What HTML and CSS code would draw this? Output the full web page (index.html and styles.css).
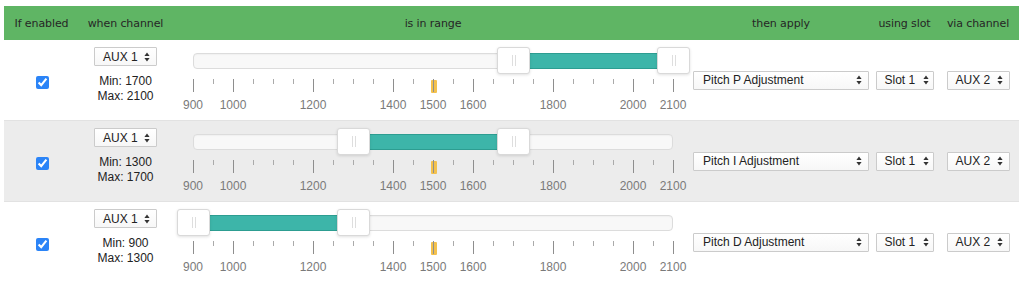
FILE: index.html
```html
<!DOCTYPE html>
<html>
<head>
<meta charset="utf-8">
<link rel="stylesheet" href="styles.css">
</head>
<body>
<div class="table">
  <div class="head">
    <div>If enabled</div>
    <div>when channel</div>
    <div class="h-range">is in range</div>
    <div>then apply</div>
    <div>using slot</div>
    <div>via channel</div>
  </div>

  <!-- Row 1 -->
  <div class="row">
    <div class="c-check"><input type="checkbox" checked></div>
    <div class="c-chan">
      <div class="sel sel-aux"><span>AUX 1</span><svg class="arr" width="6" height="10" viewBox="0 0 6 10"><path d="M3 0.5 L5.6 4 L0.4 4 Z M3 9.5 L5.6 6 L0.4 6 Z" fill="#333"/></svg></div>
      <div class="mm">Min: 1700<br>Max: 2100</div>
    </div>
    <div class="c-range">
      <div class="slider">
        <div class="track"></div>
        <div class="fill" style="left:320px;width:160px"></div>
        <div class="handle" style="left:320px"></div>
        <div class="handle" style="left:480px"></div>
      </div>
      <div class="scale">
        <i class="t big" style="left:0px"></i><i class="t" style="left:20px"></i><i class="t big" style="left:40px"></i><i class="t" style="left:60px"></i><i class="t" style="left:80px"></i><i class="t" style="left:100px"></i><i class="t big" style="left:120px"></i><i class="t" style="left:140px"></i><i class="t" style="left:160px"></i><i class="t" style="left:180px"></i><i class="t big" style="left:200px"></i><i class="t" style="left:220px"></i><i class="cur" style="left:240px"></i><i class="t big" style="left:240px"></i><i class="t" style="left:260px"></i><i class="t big" style="left:280px"></i><i class="t" style="left:300px"></i><i class="t" style="left:320px"></i><i class="t" style="left:340px"></i><i class="t big" style="left:360px"></i><i class="t" style="left:380px"></i><i class="t" style="left:400px"></i><i class="t" style="left:420px"></i><i class="t big" style="left:440px"></i><i class="t" style="left:460px"></i><i class="t big" style="left:480px"></i>
        <span class="lbl" style="left:0px">900</span><span class="lbl" style="left:40px">1000</span><span class="lbl" style="left:120px">1200</span><span class="lbl" style="left:200px">1400</span><span class="lbl" style="left:240px">1500</span><span class="lbl" style="left:280px">1600</span><span class="lbl" style="left:360px">1800</span><span class="lbl" style="left:440px">2000</span><span class="lbl" style="left:480px">2100</span>
      </div>
    </div>
    <div class="c-mid"><div class="sel sel-fn"><span>Pitch P Adjustment</span><svg class="arr" width="6" height="10" viewBox="0 0 6 10"><path d="M3 0.5 L5.6 4 L0.4 4 Z M3 9.5 L5.6 6 L0.4 6 Z" fill="#333"/></svg></div></div>
    <div class="c-mid"><div class="sel sel-slot"><span>Slot 1</span><svg class="arr" width="6" height="10" viewBox="0 0 6 10"><path d="M3 0.5 L5.6 4 L0.4 4 Z M3 9.5 L5.6 6 L0.4 6 Z" fill="#333"/></svg></div></div>
    <div class="c-mid"><div class="sel sel-aux"><span>AUX 2</span><svg class="arr" width="6" height="10" viewBox="0 0 6 10"><path d="M3 0.5 L5.6 4 L0.4 4 Z M3 9.5 L5.6 6 L0.4 6 Z" fill="#333"/></svg></div></div>
  </div>

  <!-- Row 2 -->
  <div class="row alt">
    <div class="c-check"><input type="checkbox" checked></div>
    <div class="c-chan">
      <div class="sel sel-aux"><span>AUX 1</span><svg class="arr" width="6" height="10" viewBox="0 0 6 10"><path d="M3 0.5 L5.6 4 L0.4 4 Z M3 9.5 L5.6 6 L0.4 6 Z" fill="#333"/></svg></div>
      <div class="mm">Min: 1300<br>Max: 1700</div>
    </div>
    <div class="c-range">
      <div class="slider">
        <div class="track"></div>
        <div class="fill" style="left:160px;width:160px"></div>
        <div class="handle" style="left:160px"></div>
        <div class="handle" style="left:320px"></div>
      </div>
      <div class="scale">
        <i class="t big" style="left:0px"></i><i class="t" style="left:20px"></i><i class="t big" style="left:40px"></i><i class="t" style="left:60px"></i><i class="t" style="left:80px"></i><i class="t" style="left:100px"></i><i class="t big" style="left:120px"></i><i class="t" style="left:140px"></i><i class="t" style="left:160px"></i><i class="t" style="left:180px"></i><i class="t big" style="left:200px"></i><i class="t" style="left:220px"></i><i class="cur" style="left:240px"></i><i class="t big" style="left:240px"></i><i class="t" style="left:260px"></i><i class="t big" style="left:280px"></i><i class="t" style="left:300px"></i><i class="t" style="left:320px"></i><i class="t" style="left:340px"></i><i class="t big" style="left:360px"></i><i class="t" style="left:380px"></i><i class="t" style="left:400px"></i><i class="t" style="left:420px"></i><i class="t big" style="left:440px"></i><i class="t" style="left:460px"></i><i class="t big" style="left:480px"></i>
        <span class="lbl" style="left:0px">900</span><span class="lbl" style="left:40px">1000</span><span class="lbl" style="left:120px">1200</span><span class="lbl" style="left:200px">1400</span><span class="lbl" style="left:240px">1500</span><span class="lbl" style="left:280px">1600</span><span class="lbl" style="left:360px">1800</span><span class="lbl" style="left:440px">2000</span><span class="lbl" style="left:480px">2100</span>
      </div>
    </div>
    <div class="c-mid"><div class="sel sel-fn"><span>Pitch I Adjustment</span><svg class="arr" width="6" height="10" viewBox="0 0 6 10"><path d="M3 0.5 L5.6 4 L0.4 4 Z M3 9.5 L5.6 6 L0.4 6 Z" fill="#333"/></svg></div></div>
    <div class="c-mid"><div class="sel sel-slot"><span>Slot 1</span><svg class="arr" width="6" height="10" viewBox="0 0 6 10"><path d="M3 0.5 L5.6 4 L0.4 4 Z M3 9.5 L5.6 6 L0.4 6 Z" fill="#333"/></svg></div></div>
    <div class="c-mid"><div class="sel sel-aux"><span>AUX 2</span><svg class="arr" width="6" height="10" viewBox="0 0 6 10"><path d="M3 0.5 L5.6 4 L0.4 4 Z M3 9.5 L5.6 6 L0.4 6 Z" fill="#333"/></svg></div></div>
  </div>

  <!-- Row 3 -->
  <div class="row">
    <div class="c-check"><input type="checkbox" checked></div>
    <div class="c-chan">
      <div class="sel sel-aux"><span>AUX 1</span><svg class="arr" width="6" height="10" viewBox="0 0 6 10"><path d="M3 0.5 L5.6 4 L0.4 4 Z M3 9.5 L5.6 6 L0.4 6 Z" fill="#333"/></svg></div>
      <div class="mm">Min: 900<br>Max: 1300</div>
    </div>
    <div class="c-range">
      <div class="slider">
        <div class="track"></div>
        <div class="fill" style="left:0px;width:160px"></div>
        <div class="handle" style="left:0px"></div>
        <div class="handle" style="left:160px"></div>
      </div>
      <div class="scale">
        <i class="t big" style="left:0px"></i><i class="t" style="left:20px"></i><i class="t big" style="left:40px"></i><i class="t" style="left:60px"></i><i class="t" style="left:80px"></i><i class="t" style="left:100px"></i><i class="t big" style="left:120px"></i><i class="t" style="left:140px"></i><i class="t" style="left:160px"></i><i class="t" style="left:180px"></i><i class="t big" style="left:200px"></i><i class="t" style="left:220px"></i><i class="cur" style="left:240px"></i><i class="t big" style="left:240px"></i><i class="t" style="left:260px"></i><i class="t big" style="left:280px"></i><i class="t" style="left:300px"></i><i class="t" style="left:320px"></i><i class="t" style="left:340px"></i><i class="t big" style="left:360px"></i><i class="t" style="left:380px"></i><i class="t" style="left:400px"></i><i class="t" style="left:420px"></i><i class="t big" style="left:440px"></i><i class="t" style="left:460px"></i><i class="t big" style="left:480px"></i>
        <span class="lbl" style="left:0px">900</span><span class="lbl" style="left:40px">1000</span><span class="lbl" style="left:120px">1200</span><span class="lbl" style="left:200px">1400</span><span class="lbl" style="left:240px">1500</span><span class="lbl" style="left:280px">1600</span><span class="lbl" style="left:360px">1800</span><span class="lbl" style="left:440px">2000</span><span class="lbl" style="left:480px">2100</span>
      </div>
    </div>
    <div class="c-mid"><div class="sel sel-fn"><span>Pitch D Adjustment</span><svg class="arr" width="6" height="10" viewBox="0 0 6 10"><path d="M3 0.5 L5.6 4 L0.4 4 Z M3 9.5 L5.6 6 L0.4 6 Z" fill="#333"/></svg></div></div>
    <div class="c-mid"><div class="sel sel-slot"><span>Slot 1</span><svg class="arr" width="6" height="10" viewBox="0 0 6 10"><path d="M3 0.5 L5.6 4 L0.4 4 Z M3 9.5 L5.6 6 L0.4 6 Z" fill="#333"/></svg></div></div>
    <div class="c-mid"><div class="sel sel-aux"><span>AUX 2</span><svg class="arr" width="6" height="10" viewBox="0 0 6 10"><path d="M3 0.5 L5.6 4 L0.4 4 Z M3 9.5 L5.6 6 L0.4 6 Z" fill="#333"/></svg></div></div>
  </div>
</div>
</body>
</html>
```

FILE: styles.css
```css
* { box-sizing: border-box; }
html, body { margin: 0; padding: 0; background: #fff; }
body {
  font-family: "Liberation Sans", Arial, sans-serif;
  font-size: 12px;
  color: #222;
}
.table {
  margin: 6px 0 0 4px;
  width: 1015px;
}
.head, .row {
  display: grid;
  grid-template-columns: 75px 93px 518px 182px 65px 82px;
}
.head {
  height: 34px;
  background: #5fb564;
  font-family: "DejaVu Sans", Verdana, sans-serif;
  font-size: 11px;
  letter-spacing: -0.1px;
  color: #262626;
  align-items: center;
  text-align: center;
}
.head .h-range { padding-left: 4px; }
.row {
  height: 81px;
  border-bottom: 1px solid #e2e2e2;
}
.row.alt { background: #ececec; }

.c-check {
  display: flex;
  align-items: center;
  justify-content: center;
  padding-top: 4px;
}
.c-check input {
  width: 13px;
  height: 13px;
  margin: 0 0 0 1px;
  accent-color: #2b84f7;
}
.c-chan {
  display: flex;
  flex-direction: column;
  align-items: center;
  padding-top: 7px;
}
.mm {
  margin-top: 8px;
  line-height: 15px;
  text-align: center;
  color: #222;
}
.c-mid {
  display: flex;
  align-items: center;
  justify-content: center;
}

.sel {
  display: flex;
  align-items: center;
  justify-content: space-between;
  height: 19px;
  border: 1px solid #cbcbcb;
  border-radius: 1px;
  background: linear-gradient(#ffffff, #f7f7f7);
  padding: 0 6px 0 8px;
  font-size: 12px;
  color: #222;
  white-space: nowrap;
}
.sel-aux { width: 63px; }
.sel-slot { width: 58px; padding-right: 4px; }
.sel-fn { width: 176px; padding-left: 9px; }
.arr { flex: none; }

.c-range {
  padding: 13px 0 0 21px;
}
.slider {
  position: relative;
  width: 480px;
  height: 16px;
}
.track {
  height: 16px;
  border: 1px solid #dcdcdc;
  border-radius: 4px;
  background: #f8f8f8;
  box-shadow: inset 0 1px 1px #f0f0f0;
}
.fill {
  position: absolute;
  top: 0;
  height: 16px;
  background: #3db5a9;
  border-top: 1px solid #2d9d91;
  border-bottom: 1px solid #2d9d91;
}
.handle {
  position: absolute;
  top: -6px;
  width: 33px;
  height: 27px;
  margin-left: -16px;
  background: #fff;
  border: 1px solid #d9d9d9;
  border-radius: 3px;
  box-shadow: 0 1px 3px rgba(0,0,0,0.12), inset 0 0 1px #fff;
}
.handle::before, .handle::after {
  content: "";
  position: absolute;
  top: 7px;
  width: 1px;
  height: 11px;
  background: #dedede;
}
.handle::before { left: 14px; }
.handle::after { left: 17px; }

.scale {
  position: relative;
  width: 480px;
  height: 40px;
  margin-top: 10px;
}
.t {
  position: absolute;
  top: 0;
  width: 1px;
  height: 5px;
  background: #aaa;
}
.t.big {
  height: 13px;
  background: #8e8e8e;
}
.cur {
  position: absolute;
  top: 1px;
  width: 6px;
  height: 13px;
  margin-left: -2px;
  background: #f3c14e;
  border-radius: 1px;
}
.lbl {
  position: absolute;
  top: 19px;
  line-height: 14px;
  transform: translateX(-50%);
  color: #7a7a7a;
  font-size: 12px;
  white-space: nowrap;
}
```
